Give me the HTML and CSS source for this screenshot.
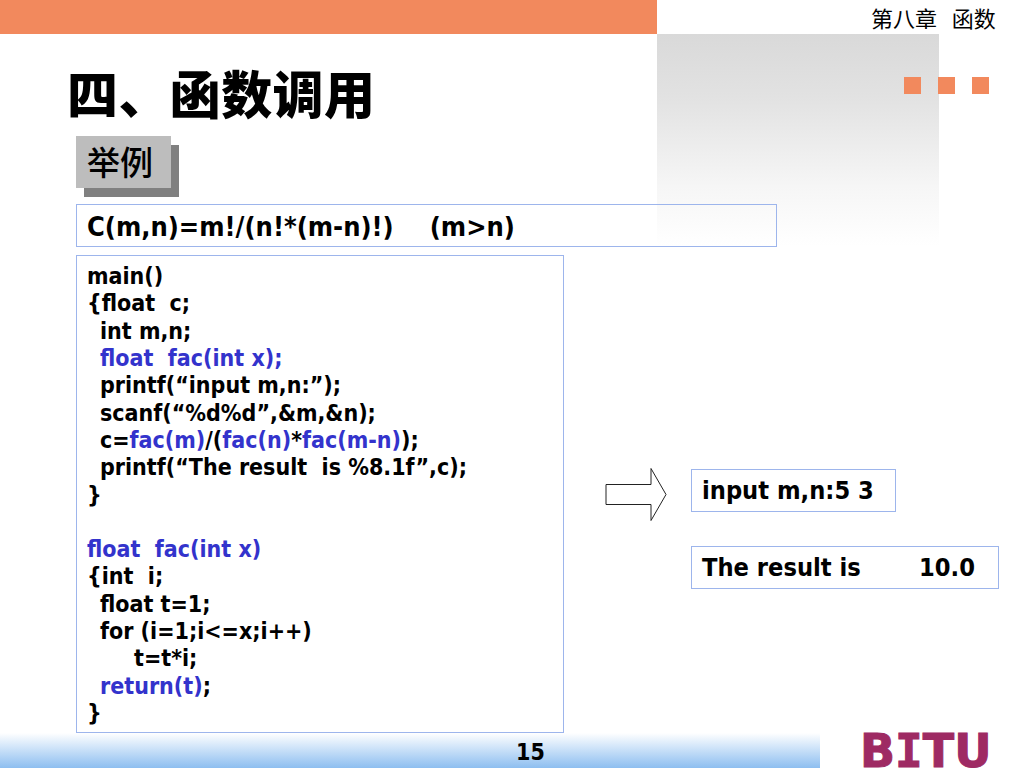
FILE: index.html
```html
<!DOCTYPE html>
<html lang="zh">
<head>
<meta charset="utf-8">
<title>第八章 函数</title>
<link rel="stylesheet" href="styles.css">
</head>
<body>
<div class="slide">
  <div class="shade"></div>
  <div class="dots"><i></i><i></i><i></i></div>
  <header class="top">
    <div class="band"></div>
    <div class="chapter">第八章&nbsp;&nbsp;&nbsp;函数</div>
  </header>
  <main class="content">
    <h1 class="title">四、函数调用</h1>
    <div class="tag">举例</div>
    <div class="box formula">C(m,n)=m!/(n!*(m-n)!)<span class="formula-gap"></span>(m&gt;n)</div>
    <div class="row">
      <div class="box code"><div>main()</div>
<div>{float&nbsp; c;</div>
<div class="i1">int m,n;</div>
<div class="i1 blue">float&nbsp; fac(int x);</div>
<div class="i1">printf(“input m,n:”);</div>
<div class="i1">scanf(“%d%d”,&amp;m,&amp;n);</div>
<div class="i1">c=<span class="blue">fac(m)</span>/(<span class="blue">fac(n)</span>*<span class="blue">fac(m-n)</span>);</div>
<div class="i1">printf(“The result&nbsp; is %8.1f”,c);</div>
<div>}</div>
<div>&nbsp;</div>
<div class="blue">float&nbsp; fac(int x)</div>
<div>{int&nbsp; i;</div>
<div class="i1">float t=1;</div>
<div class="i1">for (i=1;i&lt;=x;i++)</div>
<div class="i2">t=t*i;</div>
<div class="i1"><span class="blue">return(t)</span>;</div>
<div>}</div></div>
      <svg class="arrow" width="64" height="56" viewBox="0 0 64 56"><path d="M1 17.500H46V1.500L61 27.500L46 53.500V37.500H1Z" fill="#fff" stroke="#222" stroke-width="1"/></svg>
      <div class="results">
        <div class="box out out-a">input m,n:5 3</div>
        <div class="box out out-b"><span>The result is</span><span>10.0</span></div>
      </div>
    </div>
  </main>
  <footer class="foot">
    <div class="pagebar">15</div>
    <div class="logo">B<span class="logo-i">I</span>TU</div>
  </footer>
</div>
</body>
</html>
```
FILE: styles.css
```css
* { box-sizing: border-box; }
html, body { margin: 0; padding: 0; background: #fff; }
.slide {
  position: relative;
  width: 1024px;
  height: 768px;
  overflow: hidden;
  background: #fff;
  color: #000;
  font-family: "Noto Sans", "Noto Sans CJK SC", sans-serif;
  display: flex;
  flex-direction: column;
}
.shade {
  position: absolute;
  left: 657px;
  top: 34px;
  width: 282px;
  height: 212px;
  background: linear-gradient(#d9d9d9, #e2e2e2 30%, #f6f6f6 72%, #fff);
}
.dots {
  position: absolute;
  left: 904px;
  top: 77px;
  display: flex;
  gap: 17px;
}
.dots i { display: block; width: 17px; height: 17px; background: #f2895d; }
.top { position: relative; display: flex; height: 34px; flex: none; }
.band { width: 657px; background: #f2895d; }
.chapter {
  flex: 1;
  padding: 4px 0 0 214px;
  font: 400 22px/26px "Noto Sans CJK SC", sans-serif;
  white-space: nowrap;
}
.content { position: relative; flex: 1; padding-left: 76px; }
.title {
  margin: 23px 0 0 -9px;
  height: 79px;
  font: 900 51px/70px "Noto Sans CJK SC", sans-serif;
  letter-spacing: 0.4px;
}
.tag {
  width: 95px;
  height: 52px;
  padding-left: 11px;
  background: #bdbdbd;
  box-shadow: 8px 9px 0 #808080;
  font: 500 33px/51px "Noto Sans CJK SC", sans-serif;
}
.box {
  border: 1px solid #9db5ec;
  background: transparent;
  font-weight: 700;
  font-family: "DejaVu Sans Condensed", "DejaVu Sans", sans-serif;
}
.formula {
  width: 701px;
  height: 43px;
  margin-top: 16px;
  padding-left: 10px;
  font-size: 27px;
  line-height: 43px;
  white-space: nowrap;
}
.formula-gap { display: inline-block; width: 36px; }
.row { display: flex; margin-top: 8px; align-items: flex-start; }
.code {
  width: 488px;
  height: 478px;
  padding: 7px 0 0 10px;
  font-size: 23px;
  line-height: 27.31px;
  white-space: nowrap;
}
.i1 { padding-left: 13px; }
.i2 { padding-left: 47px; }
.blue { color: #3333cc; }
.arrow { flex: none; margin: 212px 0 0 41px; }
.results { margin: 214px 0 0 22px; display: flex; flex-direction: column; gap: 34px; }
.out { height: 43px; padding: 0 10px; font-size: 25.2px; line-height: 42px; white-space: nowrap; }
.out-a { width: 205px; }
.out-b { width: 308px; display: flex; justify-content: space-between; padding-right: 23px; }
.foot { position: relative; display: flex; height: 40px; flex: none; }
.pagebar {
  width: 820px;
  padding: 8px 0 0 516px;
  background: linear-gradient(#fff, #7db5ee);
  font: 700 23px/22px "DejaVu Sans Condensed", "DejaVu Sans", sans-serif;
}
.logo {
  padding-left: 40px;
  color: #9e2a63;
  font: 700 46px/36px "DejaVu Sans", sans-serif;
  -webkit-text-stroke: 1px #9e2a63;
  white-space: nowrap;
}
.logo-i { font-family: "DejaVu Sans Mono", monospace; }
```
